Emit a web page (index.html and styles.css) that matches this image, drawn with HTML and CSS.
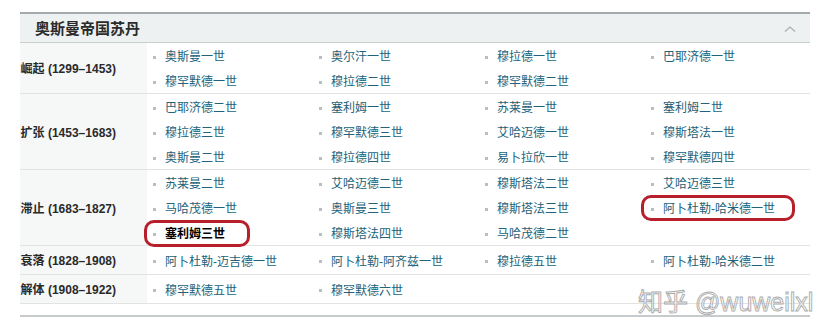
FILE: index.html
```html
<!DOCTYPE html>
<html lang="zh">
<head>
<meta charset="utf-8">
<title>奥斯曼帝国苏丹</title>
<link rel="stylesheet" href="styles.css">
</head>
<body>
<div class="navbox">
  <div class="head">
    <span class="title">奥斯曼帝国苏丹</span>
    <svg class="chev" width="12" height="8" viewBox="0 0 12 8"><polyline points="1,6.5 6,2 11,6.5" fill="none" stroke="#a8adb0" stroke-width="1.2"/></svg>
  </div>
  <div class="row">
    <div class="label">崛起 (1299–1453)</div>
    <ul class="items">
      <li>奥斯曼一世</li><li>奥尔汗一世</li><li>穆拉德一世</li><li>巴耶济德一世</li>
      <li>穆罕默德一世</li><li>穆拉德二世</li><li>穆罕默德二世</li>
    </ul>
  </div>
  <div class="row">
    <div class="label">扩张 (1453–1683)</div>
    <ul class="items">
      <li>巴耶济德二世</li><li>塞利姆一世</li><li>苏莱曼一世</li><li>塞利姆二世</li>
      <li>穆拉德三世</li><li>穆罕默德三世</li><li>艾哈迈德一世</li><li>穆斯塔法一世</li>
      <li>奥斯曼二世</li><li>穆拉德四世</li><li>易卜拉欣一世</li><li>穆罕默德四世</li>
    </ul>
  </div>
  <div class="row">
    <div class="label">滞止 (1683–1827)</div>
    <ul class="items">
      <li>苏莱曼二世</li><li>艾哈迈德二世</li><li>穆斯塔法二世</li><li>艾哈迈德三世</li>
      <li>马哈茂德一世</li><li>奥斯曼三世</li><li>穆斯塔法三世</li><li class="mark mark-b">阿卜杜勒-哈米德一世</li>
      <li class="mark mark-a current">塞利姆三世</li><li>穆斯塔法四世</li><li>马哈茂德二世</li>
    </ul>
  </div>
  <div class="row">
    <div class="label">衰落 (1828–1908)</div>
    <ul class="items">
      <li>阿卜杜勒-迈吉德一世</li><li>阿卜杜勒-阿齐兹一世</li><li>穆拉德五世</li><li>阿卜杜勒-哈米德二世</li>
    </ul>
  </div>
  <div class="row">
    <div class="label">解体 (1908–1922)</div>
    <ul class="items">
      <li>穆罕默德五世</li><li>穆罕默德六世</li>
    </ul>
  </div>
  <div class="foot"></div>
</div>
<div class="watermark">知乎 @wuweilxl</div>
</body>
</html>
```

FILE: styles.css
```css
html, body {
  margin: 0;
  padding: 0;
  background: #ffffff;
}
body {
  position: relative;
  width: 838px;
  height: 333px;
  overflow: hidden;
  font-family: "Liberation Sans", "Noto Sans CJK SC", sans-serif;
}
.navbox {
  margin: 12px 0 0 20px;
  width: 790px;
}
.head {
  display: flex;
  align-items: center;
  justify-content: space-between;
  height: 28px;
  border-top: 2px solid #a3aaac;
  border-bottom: 1px solid #c9cecf;
  background: #edf1f1;
  padding: 0 14px 0 15px;
}
.title {
  font-size: 15px;
  font-weight: bold;
  color: #2b2b2b;
  font-family: "Noto Sans CJK SC", sans-serif;
  line-height: 28px;
}
.chev {
  display: block;
  margin-top: 1px;
}
.row {
  display: flex;
  border-bottom: 1px solid #e2e4e4;
}
.label {
  width: 127px;
  flex: none;
  box-sizing: border-box;
  padding: 5px 31px 3px 0;
  line-height: 20px;
  white-space: nowrap;
  overflow: hidden;
  font-size: 12px;
  font-weight: bold;
  color: #2a2a2a;
  background: #f6f7f7;
  display: flex;
  align-items: center;
  justify-content: flex-end;
}
.items {
  list-style: none;
  margin: 0;
  padding: 0;
  display: grid;
  grid-template-columns: repeat(4, 166px);
  grid-auto-rows: 25px;
  align-content: center;
}
.items li {
  position: relative;
  display: flex;
  align-items: center;
  gap: 9px;
  box-sizing: border-box;
  height: 25px;
  padding: 3px 0 0 6px;
  font-size: 12px;
  line-height: 20px;
  color: #22627a;
  white-space: nowrap;
}
.items li::before {
  content: "";
  width: 3px;
  height: 3px;
  background: #b9bfc1;
  flex: none;
}
.items li.current {
  color: #000;
  font-weight: bold;
}
.mark::after {
  content: "";
  position: absolute;
  box-sizing: border-box;
  border: 3px solid #b71f2b;
  border-radius: 10px;
}
.mark-a::after {
  left: -3px;
  top: 0;
  width: 106px;
  height: 27px;
}
.mark-b::after {
  left: -4px;
  top: 0;
  width: 154px;
  height: 26px;
}
.foot {
  height: 11px;
  border-bottom: 2px solid #c8cbcc;
}
.watermark {
  position: absolute;
  left: 638px;
  top: 286px;
  font-size: 25px;
  line-height: 32px;
  color: rgba(255, 255, 255, 0.6);
  -webkit-text-stroke: 0.9px #ababab;
  white-space: nowrap;
  font-family: "Liberation Sans", "Noto Sans CJK SC", sans-serif;
}
```
